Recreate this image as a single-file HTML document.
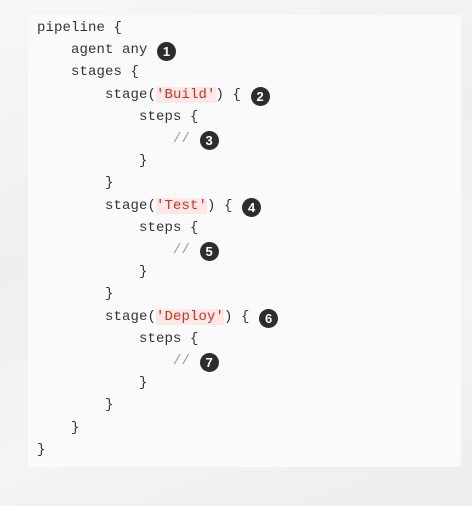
<!DOCTYPE html>
<html><head><style>
html,body{margin:0;padding:0;}
body{width:472px;height:506px;background:#efefef;position:relative;overflow:hidden;}
.bg1{position:absolute;left:0;top:0;width:472px;height:506px;background:linear-gradient(160deg,#f7f7f7 0%,#efefef 40%,#f4f4f4 70%,#ededed 100%);}
.box{position:absolute;left:28px;top:15px;width:433px;height:452px;background:#fafafa;}
pre{margin:0;position:absolute;left:37px;top:17px;font-family:"Liberation Mono",monospace;font-size:14px;letter-spacing:0.1px;line-height:22.2px;color:#333;}
.s{color:#dd2c1f;background:#fbe9e7;}
.c{color:#999;}
.b{display:inline-block;width:19px;height:19px;border-radius:50%;background:#2d2d2d;color:#fff;font-family:"Liberation Sans",sans-serif;font-weight:bold;font-size:13px;line-height:19px;text-align:center;letter-spacing:0;vertical-align:-3px;margin-left:1px;}
</style></head><body>
<div class="bg1"></div>
<div class="box"></div>
<pre>pipeline {
    agent any <span class="b">1</span>
    stages {
        stage(<span class="s">'Build'</span>) { <span class="b">2</span>
            steps {
                <span class="c">//</span> <span class="b">3</span>
            }
        }
        stage(<span class="s">'Test'</span>) { <span class="b">4</span>
            steps {
                <span class="c">//</span> <span class="b">5</span>
            }
        }
        stage(<span class="s">'Deploy'</span>) { <span class="b">6</span>
            steps {
                <span class="c">//</span> <span class="b">7</span>
            }
        }
    }
}</pre>
</body></html>
